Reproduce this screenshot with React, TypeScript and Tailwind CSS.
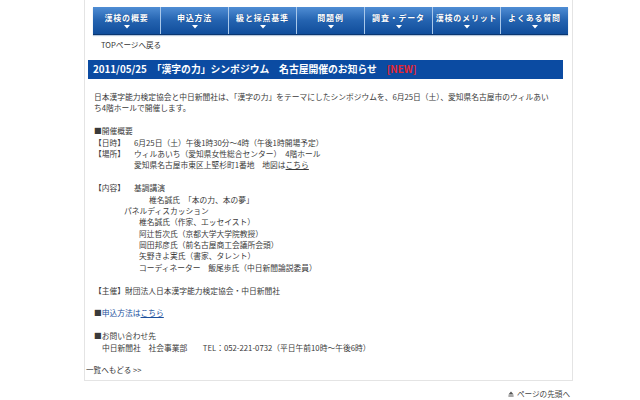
import React from 'react';

const tabs = ['漢検の概要', '申込方法', '級と採点基準', '問題例', '調査・データ', '漢検のメリット', 'よくある質問'];

const font = { fontFamily: '"Noto Sans CJK JP", "Noto Sans", sans-serif' };

function NavTab({ label, last }: { label: string; last: boolean }) {
  return (
    <div
      className={`flex flex-1 flex-col items-center justify-center bg-[linear-gradient(to_bottom,#4f8dd4,#2463b0_50%,#104d9b)] ${last ? '' : 'border-r border-[#a9c8ea]'}`}
    >
      <span className="mt-[1px] whitespace-nowrap text-[8px] font-bold leading-[10px] tracking-[0.8px] text-white [text-shadow:0_0_1px_#0a3a7a]">
        {label}
      </span>
      <svg width="6" height="4" viewBox="0 0 6 4" className="mt-[2px]">
        <path d="M0 0H6L3 3.5Z" fill="#ffffff" />
      </svg>
    </div>
  );
}

function Line({ children, pl = 0, className = '' }: { children?: React.ReactNode; pl?: number; className?: string }) {
  return (
    <div className={`h-[11.4px] whitespace-nowrap ${className}`} style={pl ? { paddingLeft: pl } : undefined}>
      {children}
    </div>
  );
}

export default function App() {
  return (
    <div className="h-[400px] w-[640px] bg-white text-[#3a3a3a]" style={font}>
      <div className="ml-[84px] flex h-[381px] w-[489px] flex-col border-x border-b border-[#e4e4e4]">
        <div className="ml-[8px] mt-[7px] flex h-[28px] w-[475px] border-b border-[#0a3670] shadow-[0_1px_1px_#b8c8dc]">
          {tabs.map((t, i) => (
            <NavTab key={t} label={t} last={i === tabs.length - 1} />
          ))}
        </div>

        <div className="ml-[16px] mt-[4px] text-[7.6px] leading-[12px] text-[#333]">TOPページへ戻る</div>

        <div className="ml-[3px] mt-[9px] flex h-[19px] w-[475px] items-center bg-[#0b4ba2] pl-[5px] text-[9.8px] font-bold text-white">
          <span className="whitespace-pre">2011/05/25　「漢字の力」シンポジウム　名古屋開催のお知らせ　</span>
          <span className="text-[#e8252f]">[NEW]</span>
        </div>

        <div className="ml-[9px] mt-[12px] text-[7.75px] leading-[11.4px]">
          <Line>日本漢字能力検定協会と中日新聞社は、「漢字の力」をテーマにしたシンポジウムを、6月25日（土）、愛知県名古屋市のウィルあい</Line>
          <Line>ち4階ホールで開催します。</Line>
          <Line />
          <Line>■開催概要</Line>
          <Line>
            <span className="inline-block w-[40px]">【日時】</span>6月25日（土）午後1時30分～4時（午後1時開場予定）
          </Line>
          <Line>
            <span className="inline-block w-[40px]">【場所】</span>
            <span className="whitespace-pre">ウィルあいち（愛知県女性総合センター）　4階ホール</span>
          </Line>
          <Line pl={40}>
            <span className="whitespace-pre">愛知県名古屋市東区上堅杉町1番地　地図は</span>
            <span className="underline">こちら</span>
          </Line>
          <Line />
          <Line>
            <span className="inline-block w-[40px]">【内容】</span>基調講演
          </Line>
          <Line pl={55}>
            <span className="whitespace-pre">椎名誠氏　「本の力、本の夢」</span>
          </Line>
          <Line pl={30}>パネルディスカッション</Line>
          <Line pl={45}>椎名誠氏（作家、エッセイスト）</Line>
          <Line pl={45}>阿辻哲次氏（京都大学大学院教授）</Line>
          <Line pl={45}>岡田邦彦氏（前名古屋商工会議所会頭）</Line>
          <Line pl={45}>矢野きよ実氏（書家、タレント）</Line>
          <Line pl={45}>
            <span className="whitespace-pre">コーディネーター　飯尾歩氏（中日新聞論説委員）</span>
          </Line>
          <Line />
          <Line>【主催】財団法人日本漢字能力検定協会・中日新聞社</Line>
          <Line />
          <Line>
            ■<span className="text-[#1b4f9c]">申込方法は</span>
            <span className="text-[#1b4f9c] underline">こちら</span>
          </Line>
          <Line />
          <Line>■お問い合わせ先</Line>
          <Line pl={8}>
            <span className="whitespace-pre">中日新聞社　社会事業部　　TEL：052-221-0732（平日午前10時～午後6時）</span>
          </Line>
        </div>

        <div className="ml-[1px] mt-auto mb-[4px] text-[7.6px] leading-[12px] text-[#333]">一覧へもどる &gt;&gt;</div>
      </div>

      <div className="ml-[506px] mt-[8px] flex w-[64px] items-center justify-end gap-[3px] text-[7.6px] leading-[10px] text-[#444]">
        <svg width="6" height="6" viewBox="0 0 6 6" className="shrink-0">
          <path d="M3 0.5L5.6 3.6H0.4Z" fill="#555" />
          <rect x="0.4" y="4.5" width="5.2" height="1" fill="#555" />
        </svg>
        <span className="whitespace-nowrap">ページの先頭へ</span>
      </div>
    </div>
  );
}
